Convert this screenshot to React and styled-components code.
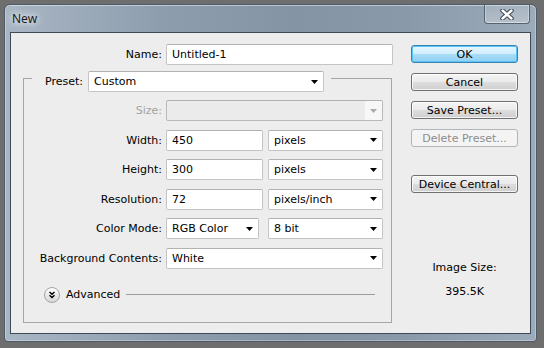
import React from 'react'
import styled, { createGlobalStyle } from 'styled-components'

const GlobalStyle = createGlobalStyle`
html, body {
    margin: 0;
    padding: 0;
    background: #6e6e6e;
}
body {
    width: 544px;
    height: 348px;
    overflow: hidden;
    font-family: "DejaVu Sans", Tahoma, sans-serif;
    font-size: 11px;
    color: #000;
}
`

const Page = styled.div`
padding: 4px 7px 6px 4px;
`

const Window = styled.div`
width: 533px;
height: 338px;
box-sizing: border-box;
display: flex;
flex-direction: column;
padding: 0 5px 7px 5px;
border: 1px solid #4d5a68;
border-radius: 6px 6px 4px 4px;
background: linear-gradient(to right, #a8b6c4 0%, #8e9dae 30%, #8594a5 55%, #8a99aa 75%, #9cabba 100%);
box-shadow: inset 0 1px 0 rgba(255,255,255,.45), inset 1px 0 0 rgba(255,255,255,.3), inset -1px 0 0 rgba(255,255,255,.3), inset 0 -1px 0 rgba(255,255,255,.3);
`

const TitleBar = styled.div`
height: 27px;
display: flex;
align-items: center;
justify-content: space-between;
`

const Title = styled.span`
margin-left: 2px;
margin-top: -1px;
font-family: "Noto Sans", sans-serif;
font-size: 12px;
color: #1a1a1a;
text-shadow: 0 0 6px #fff, 0 0 10px rgba(255,255,255,.8);
`

const CloseButton = styled.div`
align-self: flex-start;
width: 46px;
height: 19px;
margin-right: 1px;
box-sizing: border-box;
display: flex;
align-items: center;
justify-content: center;
border: 1px solid #56636f;
border-top: none;
border-radius: 0 0 4px 4px;
background: linear-gradient(to bottom, rgba(255,255,255,.12), rgba(255,255,255,.28));
box-shadow: inset 0 -1px 0 rgba(255,255,255,.45), inset 1px 0 0 rgba(255,255,255,.3), inset -1px 0 0 rgba(255,255,255,.3);
`

const Client = styled.div`
flex: 1;
display: flex;
padding: 11px 12px 0 12px;
border: 1px solid #3e4a57;
background: #ededed;
`

const LeftPane = styled.div`
width: 370px;
display: flex;
flex-direction: column;
`

const Row = styled.div`
display: grid;
grid-template-columns: ${p => p.$labelWidth}px auto;
column-gap: 4px;
align-items: center;
height: 21px;
`

const Label = styled.span`
text-align: right;
white-space: nowrap;
color: ${p => p.$disabled ? '#a3a3a3' : '#000'};
`

const TextBox = styled.input`
width: ${p => p.$width}px;
height: 21px;
box-sizing: border-box;
margin: 0;
padding: 0 5px;
border: 1px solid #c4c4c4;
border-top-color: #b2b2b2;
border-radius: 2px;
background: #fff;
font: inherit;
color: #000;
outline: none;
`

const Combo = styled.div`
width: ${p => p.$width}px;
height: 21px;
box-sizing: border-box;
display: flex;
align-items: center;
padding-left: 5px;
border: 1px solid ${p => p.$disabled ? '#b9b9b9' : '#c4c4c4'};
border-top-color: ${p => p.$disabled ? '#b0b0b0' : '#b2b2b2'};
border-radius: 2px;
background: ${p => p.$disabled ? '#ebebeb' : '#fff'};
white-space: nowrap;
`

const ComboText = styled.span`
flex: 1;
`

const ArrowBox = styled.span`
width: 17px;
align-self: stretch;
display: flex;
align-items: center;
justify-content: center;
background: ${p => p.$disabled ? '#f7f7f7' : 'transparent'};
`

const Controls = styled.div`
display: flex;
gap: ${p => p.$gap}px;
`

const Group = styled.fieldset`
width: 369px;
box-sizing: border-box;
min-width: 0;
margin: 0;
padding: 0 0 19px 0;
border: 1px solid #a6a6a6;
`

const Legend = styled.legend`
display: flex;
align-items: center;
gap: 5px;
margin-left: 8px;
padding: 6px 7px 0 13px;
`

const Fields = styled.div`
display: flex;
flex-direction: column;
gap: 8.5px;
margin-top: 8px;
`

const AdvancedRow = styled.div`
display: flex;
align-items: center;
height: 16px;
margin-top: 18px;
padding-left: 20px;
padding-right: 16px;
gap: 6px;
`

const Rule = styled.div`
flex: 1;
height: 1px;
background: #9c9c9c;
`

const RightPane = styled.div`
width: 107px;
margin-left: 18px;
margin-top: 1px;
display: flex;
flex-direction: column;
gap: 10px;
`

const Button = styled.div`
height: 18px;
box-sizing: border-box;
display: flex;
align-items: center;
justify-content: center;
margin-top: ${p => p.$spaced ? 18 : 0}px;
border: 1px solid ${p => p.$default ? '#3c7fb1' : p.$disabled ? '#b1b5b8' : '#707070'};
border-radius: 3px;
color: ${p => p.$disabled ? '#8d8d8d' : '#000'};
background: ${p => p.$default
    ? 'linear-gradient(to bottom, #e8f6fd 0%, #cfeefd 48%, #a9dcf7 52%, #8fd0f3 100%)'
    : p.$disabled
        ? '#f4f4f4'
        : 'linear-gradient(to bottom, #f4f4f4 0%, #ebebeb 48%, #dddddd 52%, #cfcfcf 100%)'};
box-shadow: ${p => p.$default ? 'inset 0 0 0 1px #56c6f8' : p.$disabled ? 'none' : 'inset 0 0 0 1px rgba(255,255,255,.75)'};
white-space: nowrap;
`

const SizeInfo = styled.div`
margin-top: 58px;
display: flex;
flex-direction: column;
align-items: center;
gap: 10px;
line-height: 14px;
`

function Arrow({ color = '#000' }) {
    return (
        <svg width="7" height="4" viewBox="0 0 7 4">
            <polygon points="0,0 7,0 3.5,4" fill={color} />
        </svg>
    )
}

function Select({ width, value, disabled }) {
    return (
        <Combo $width={width} $disabled={disabled}>
            <ComboText>{value}</ComboText>
            <ArrowBox $disabled={disabled}>
                <Arrow color={disabled ? '#a9a9a9' : '#000'} />
            </ArrowBox>
        </Combo>
    )
}

function CloseGlyph() {
    return (
        <svg width="14" height="11" viewBox="0 0 14 11">
            <path d="M2.5 1.5 L11.5 9.5 M11.5 1.5 L2.5 9.5" stroke="#3b4652" strokeWidth="4.4" strokeLinecap="round" fill="none" />
            <path d="M2.5 1.5 L11.5 9.5 M11.5 1.5 L2.5 9.5" stroke="#fff" strokeWidth="2.4" strokeLinecap="round" fill="none" />
        </svg>
    )
}

function ExpandIcon() {
    return (
        <svg width="16" height="16" viewBox="0 0 16 16">
            <defs>
                <linearGradient id="adv" x1="0" y1="0" x2="0" y2="1">
                    <stop offset="0" stopColor="#ffffff" />
                    <stop offset="1" stopColor="#d6d6d6" />
                </linearGradient>
            </defs>
            <circle cx="8" cy="8" r="7.5" fill="url(#adv)" stroke="#a3a3a3" />
            <path d="M5.5 5 L8 7.3 L10.5 5 M5.5 8.2 L8 10.5 L10.5 8.2" stroke="#000" strokeWidth="1.4" fill="none" />
        </svg>
    )
}

const fields = [
    { label: 'Size:', disabled: true, controls: [{ select: true, width: 217, value: '', disabled: true }] },
    { label: 'Width:', gap: 5, controls: [{ width: 97, value: '450' }, { select: true, width: 115, value: 'pixels' }] },
    { label: 'Height:', gap: 5, controls: [{ width: 97, value: '300' }, { select: true, width: 115, value: 'pixels' }] },
    { label: 'Resolution:', gap: 5, controls: [{ width: 97, value: '72' }, { select: true, width: 115, value: 'pixels/inch' }] },
    { label: 'Color Mode:', gap: 9, controls: [{ select: true, width: 93, value: 'RGB Color' }, { select: true, width: 115, value: '8 bit' }] },
    { label: 'Background Contents:', controls: [{ select: true, width: 217, value: 'White' }] },
]

export default function App() {
    return (
        <Page>
            <GlobalStyle />
            <Window>
                <TitleBar>
                    <Title>New</Title>
                    <CloseButton><CloseGlyph /></CloseButton>
                </TitleBar>
                <Client>
                    <LeftPane>
                        <Row $labelWidth={139}>
                            <Label>Name:</Label>
                            <TextBox $width={227} value="Untitled-1" readOnly />
                        </Row>
                        <Group>
                            <Legend>
                                <span>Preset:</span>
                                <Select width={236} value="Custom" />
                            </Legend>
                            <Fields>
                                {fields.map((field, index) => (
                                    <Row $labelWidth={138} key={index}>
                                        <Label $disabled={field.disabled}>{field.label}</Label>
                                        <Controls $gap={field.gap || 0}>
                                            {field.controls.map((c, i) => c.select
                                                ? <Select key={i} width={c.width} value={c.value} disabled={c.disabled} />
                                                : <TextBox key={i} $width={c.width} value={c.value} readOnly />
                                            )}
                                        </Controls>
                                    </Row>
                                ))}
                            </Fields>
                            <AdvancedRow>
                                <ExpandIcon />
                                <span>Advanced</span>
                                <Rule />
                            </AdvancedRow>
                        </Group>
                    </LeftPane>
                    <RightPane>
                        <Button $default>OK</Button>
                        <Button>Cancel</Button>
                        <Button>Save Preset...</Button>
                        <Button $disabled>Delete Preset...</Button>
                        <Button $spaced>Device Central...</Button>
                        <SizeInfo>
                            <span>Image Size:</span>
                            <span>395.5K</span>
                        </SizeInfo>
                    </RightPane>
                </Client>
            </Window>
        </Page>
    )
}
